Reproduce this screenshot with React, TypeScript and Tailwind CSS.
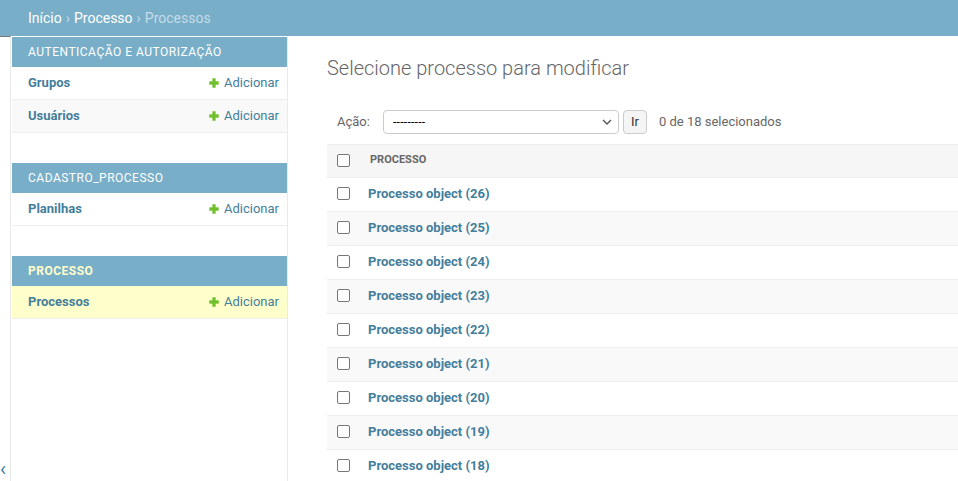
import React from "react";

const modules = [
  {
    name: "Autenticação e Autorização",
    current: false,
    models: [
      { name: "Grupos", current: false },
      { name: "Usuários", current: false },
    ],
  },
  {
    name: "Cadastro_processo",
    current: false,
    models: [{ name: "Planilhas", current: false }],
  },
  {
    name: "Processo",
    current: true,
    models: [{ name: "Processos", current: true }],
  },
];

const rows = [26, 25, 24, 23, 22, 21, 20, 19, 18];

function AddIcon() {
  return (
    <svg width="10" height="10" viewBox="0 0 10 10" className="shrink-0">
      <path
        d="M3.6 0.5h2.8v3.1h3.1v2.8H6.4v3.1H3.6V6.4H0.5V3.6h3.1z"
        fill="#70bf2b"
        stroke="#70bf2b"
        strokeWidth="0.4"
        strokeLinejoin="round"
      />
    </svg>
  );
}

function Checkbox() {
  return (
    <input
      type="checkbox"
      className="m-0 h-[13px] w-[13px] appearance-none rounded-[2px] border border-[#767676] bg-white"
    />
  );
}

export default function App() {
  return (
    <div
      className="flex h-screen flex-col overflow-hidden bg-white text-[13px] text-[#333]"
      style={{ fontFamily: "Roboto, 'Lucida Grande', Verdana, Arial, sans-serif" }}
    >
      {/* breadcrumbs */}
      <div className="flex h-[36px] shrink-0 items-center bg-[#79aec8] pl-[28px] text-[14px] text-[#c4dce8]">
        <span className="text-white">Início</span>
        <span className="mx-[4px]">›</span>
        <span className="text-white">Processo</span>
        <span className="mx-[4px]">›</span>
        <span>Processos</span>
      </div>

      <div className="flex min-h-0 flex-1">
        {/* sidebar toggle */}
        <div className="flex w-[11px] shrink-0 flex-col justify-end border-r border-t border-r-[#eaeaea] border-t-[#777] pb-[2px]">
          <span className="text-[20px] leading-none text-[#447e9b]">‹</span>
        </div>

        {/* nav sidebar */}
        <nav className="w-[277px] shrink-0 border-r border-[#eaeaea] pl-px pt-px">
          {modules.map((m) => (
            <div key={m.name} className="mb-[30px]">
              <div
                className={`bg-[#79aec8] py-[8px] pl-[16px] text-[12px] uppercase leading-[14px] tracking-[0.5px] ${
                  m.current ? "font-bold text-[#ffc]" : "text-white"
                }`}
              >
                {m.name}
              </div>
              {m.models.map((model, i) => (
                <div
                  key={model.name}
                  className={`flex h-[33px] items-center justify-between border-b border-[#eee] pl-[16px] pr-[8px] ${
                    model.current ? "bg-[#ffc]" : i % 2 === 1 ? "bg-[#f9f9f9]" : "bg-white"
                  }`}
                >
                  <span className="font-bold text-[#447e9b]">{model.name}</span>
                  <span className="flex items-center gap-[5px] text-[#447e9b]">
                    <AddIcon />
                    Adicionar
                  </span>
                </div>
              ))}
            </div>
          ))}
        </nav>

        {/* content */}
        <main className="min-w-0 flex-1 pl-[39px] pt-[20px]">
          <h1 className="m-0 text-[20px] font-light leading-[24px] text-[#666]">
            Selecione processo para modificar
          </h1>

          <div className="mt-[30px] flex h-[24px] items-center pl-[10px] text-[#666]">
            <span>Ação:</span>
            <div className="ml-[13px] flex h-[24px] w-[236px] items-center justify-between rounded-[4px] border border-[#ccc] bg-white pl-[9px] pr-[6px] text-black">
              <span className="text-[12px] tracking-[0.3px]">---------</span>
              <svg width="10" height="6" viewBox="0 0 10 6">
                <path d="M1 1l4 4 4-4" fill="none" stroke="#555" strokeWidth="1.4" />
              </svg>
            </div>
            <div className="ml-[4px] flex h-[24px] w-[24px] items-center justify-center rounded-[4px] border border-[#ccc] bg-[#f5f5f5] text-[#333]">
              Ir
            </div>
            <span className="ml-[12px]">0 de 18 selecionados</span>
          </div>

          <div className="mt-[10px]">
            <div className="flex h-[34px] items-center border-y border-[#eee] bg-[#f6f6f6] pb-px pl-[10px]">
              <Checkbox />
              <span className="ml-[20px] text-[11px] font-bold uppercase text-[#666]">Processo</span>
            </div>
            {rows.map((n, i) => (
              <div
                key={n}
                className={`flex h-[34px] items-center border-b border-[#eee] pb-[2px] pl-[10px] ${
                  i % 2 === 1 ? "bg-[#f9f9f9]" : "bg-white"
                }`}
              >
                <Checkbox />
                <span className="ml-[18px] font-bold text-[#447e9b]">Processo object ({n})</span>
              </div>
            ))}
          </div>
        </main>
      </div>
    </div>
  );
}
